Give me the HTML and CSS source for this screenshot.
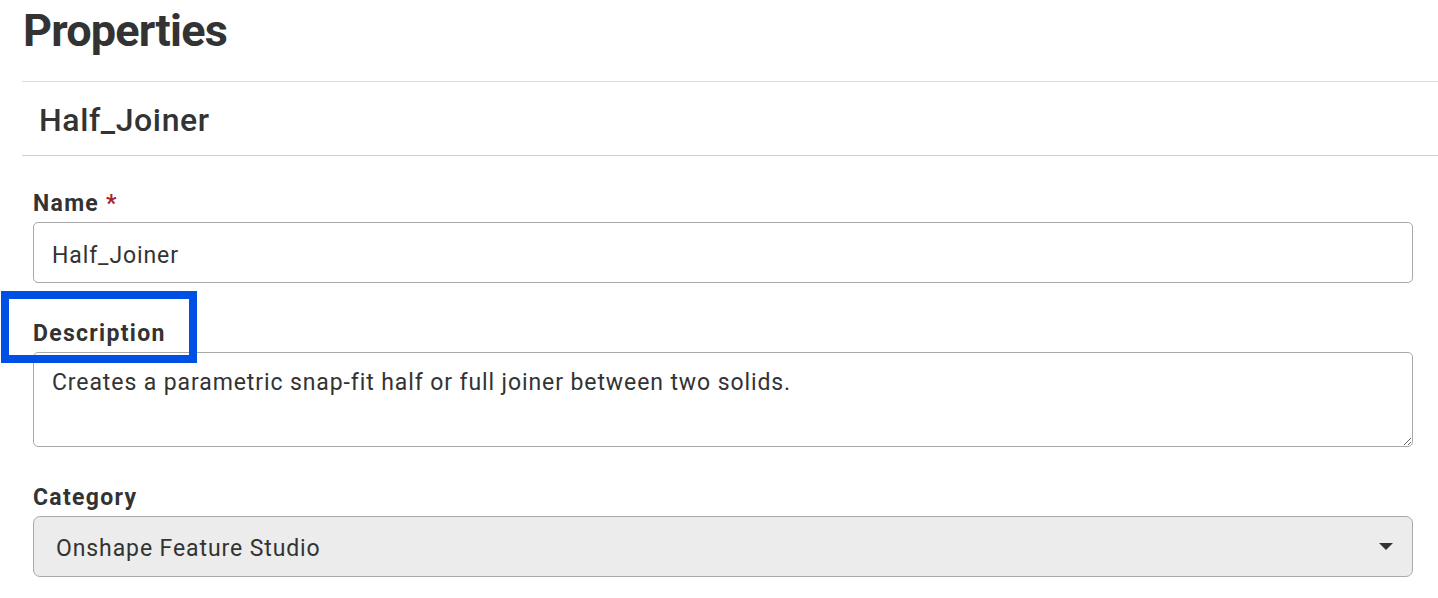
FILE: index.html
```html
<!DOCTYPE html>
<html>
<head>
<meta charset="utf-8">
<link rel="stylesheet" href="styles.css">
</head>
<body>
<div class="panel">
  <h1 class="title">Properties</h1>
  <div class="subhead"><h2 class="subtitle">Half_Joiner</h2></div>
  <form class="form">
    <div class="field">
      <label class="label">Name <span class="req">*</span></label>
      <input class="input" type="text" value="Half_Joiner">
    </div>
    <div class="field">
      <label class="label">Description</label>
      <textarea class="textarea">Creates a parametric snap-fit half or full joiner between two solids.</textarea>
    </div>
    <div class="field">
      <label class="label">Category</label>
      <div class="select">
        <span class="select-text">Onshape Feature Studio</span>
        <span class="caret"></span>
      </div>
    </div>
  </form>
  <div class="highlight"></div>
</div>
</body>
</html>
```
FILE: styles.css
```css
html, body {
  margin: 0;
  padding: 0;
  background: #fff;
}
body {
  font-family: Roboto, "Liberation Sans", sans-serif;
  color: #333;
  width: 1438px;
  height: 598px;
  overflow: hidden;
}
.panel {
  position: relative;
  padding-left: 22px;
}
.title {
  margin: 0;
  font-size: 45px;
  font-weight: 700;
  letter-spacing: -0.8px;
  line-height: 60px;
  height: 82px;
  padding-left: 1px;
  border-bottom: 1px solid #dcdcdc;
  box-sizing: border-box;
  padding-top: 1px;
}
.subhead {
  height: 74px;
  border-bottom: 1px solid #cfcfcf;
  box-sizing: border-box;
  padding-left: 17px;
  padding-top: 3px;
  display: flex;
  align-items: center;
}
.subtitle {
  margin: 0;
  font-size: 32px;
  font-weight: 500;
  letter-spacing: 0.6px;
}
.form {
  padding: 35px 25px 0 11px;
  display: flex;
  flex-direction: column;
  gap: 38px;
}
.field {
  display: flex;
  flex-direction: column;
  gap: 5px;
}
.label {
  font-size: 23px;
  font-weight: 700;
  line-height: 26px;
  letter-spacing: 1.3px;
}
.req {
  color: #a8232b;
}
.input {
  font-family: inherit;
  font-size: 23px;
  letter-spacing: 0.9px;
  color: #333;
  height: 61px;
  box-sizing: border-box;
  border: 1px solid #a9a9a9;
  border-radius: 5px;
  padding: 5px 18px 0;
  margin: 0;
  outline: none;
}
.textarea {
  font-family: inherit;
  font-size: 23px;
  letter-spacing: 0.9px;
  color: #333;
  height: 95px;
  box-sizing: border-box;
  border: 1px solid #a9a9a9;
  border-radius: 5px;
  padding: 16px 18px;
  margin: 0;
  resize: vertical;
  outline: none;
}
.select {
  height: 61px;
  box-sizing: border-box;
  border: 1px solid #a9a9a9;
  border-radius: 7px;
  background: #ececec;
  display: flex;
  align-items: center;
  justify-content: space-between;
  padding: 4px 19px 0 22px;
  font-size: 23px;
  letter-spacing: 0.9px;
}
.caret {
  width: 0;
  height: 0;
  margin-top: -4px;
  border-left: 7px solid transparent;
  border-right: 7px solid transparent;
  border-top: 7px solid #333;
}
.highlight {
  position: absolute;
  left: 1px;
  top: 291px;
  width: 196px;
  height: 72px;
  box-sizing: border-box;
  border: 8px solid #0050e6;
}
```
